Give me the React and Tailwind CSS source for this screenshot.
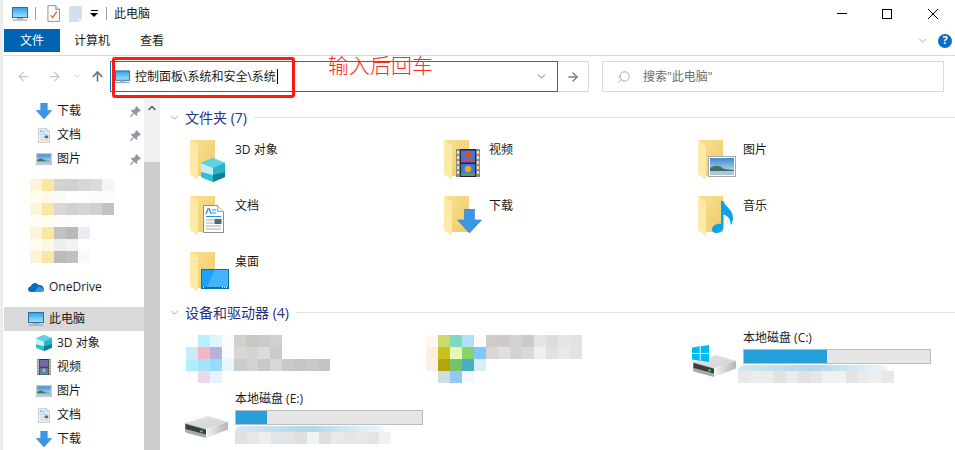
import { ArrowLeft, ArrowRight, ArrowUp, ChevronDown, ChevronUp, Search } from "lucide-react";

// 模糊处理的马赛克块
const navMosaic = [
  ["bg-[#fdf5d9]", "bg-[#fbe6a6]", "bg-[#d5d3cf]", "bg-[#cfd0d0]", "bg-[#d7d7d5]", "bg-[#dcdbd8]", "bg-[#f4f5f9]"],
  ["bg-[#fefbf0]", "bg-[#fef9e8]", "bg-[#fafafa]", "bg-[#fefefe]", "bg-[#fdfdfd]", "bg-[#fcfcfc]", "bg-[#fcfcfe]"],
  ["bg-[#fdf5d9]", "bg-[#fbe6a6]", "bg-[#d8d7d5]", "bg-[#d0d0d0]", "bg-[#d6d5d3]", "bg-[#d2ced2]", "bg-[#c2c2c2]"],
  ["bg-[#fffdf5]", "bg-[#fffcf0]", "bg-[#fcfcfc]", "bg-[#fdfdfd]", "bg-[#fcfefe]"],
  ["bg-[#fdf5d9]", "bg-[#fbe6a6]", "bg-[#c4c1be]", "bg-[#b9b9b7]", "bg-[#e9ecf0]"],
  ["bg-[#fffbee]", "bg-[#fdf8e2]", "bg-[#eeeeee]", "bg-[#f3f3f3]"],
  ["bg-[#fdf3d6]", "bg-[#fbe6a4]", "bg-[#bcbaba]", "bg-[#c1bfc0]", "bg-[#f6fafb]"],
];

const deviceMosaicA = [
  ["bg-transparent", "bg-[#b8eeff]", "bg-[#e0f5ff]", "bg-[#fcfcff]", "bg-[#d0d0ce]", "bg-[#c8c7c4]", "bg-[#ccc9cc]", "bg-[#cfd1cf]"],
  ["bg-[#c8ecf9]", "bg-[#f5b6c4]", "bg-[#b3b3d8]", "bg-[#f5fbff]", "bg-[#d6d6d4]", "bg-[#d4d4d2]", "bg-[#dcdada]", "bg-[#c9cbc9]"],
  ["bg-[#aeeefe]", "bg-[#a4e2fe]", "bg-[#97dbff]", "bg-[#e8f7ff]", "bg-[#ccccca]", "bg-[#d2d2d0]", "bg-[#c9c8c4]", "bg-[#d6d7d6]", "bg-[#cbcac8]", "bg-[#c6c5c2]", "bg-[#ccc8c8]", "bg-[#c2c4c1]"],
  ["bg-transparent", "bg-[#ecd8e8]", "bg-[#e8f3ff]"],
];

const deviceMosaicB = [
  ["bg-[#fff8f0]", "bg-[#cdd96a]", "bg-[#7fd8c0]", "bg-[#b0e0fb]", "bg-[#fcfdfe]", "bg-[#cfcbca]", "bg-[#cdcac9]", "bg-[#d2d2d6]", "bg-[#cdcaca]", "bg-[#e4e5e7]", "bg-[#dedcdd]", "bg-[#e5e6e6]", "bg-[#e3e3e5]"],
  ["bg-[#ffeedd]", "bg-[#c8c21c]", "bg-[#e5f8b8]", "bg-[#86d566]", "bg-[#7fc8ff]", "bg-[#dad5d3]", "bg-[#e0e1df]", "bg-[#d5d2d6]", "bg-[#dad9d9]", "bg-[#eeefee]", "bg-[#e2e1e1]", "bg-[#e8e9e8]", "bg-[#e3e3e3]"],
  ["bg-[#fff0e4]", "bg-[#b5a50a]", "bg-[#74c46a]", "bg-[#48afc0]", "bg-[#d8eefb]"],
  ["bg-transparent", "bg-[#cddde0]", "bg-[#95c8f9]", "bg-[#f3f9ff]"],
];

const driveBlurC = [["bg-[#e9e9e9]", "bg-[#ececec]", "bg-[#ececea]", "bg-[#e2e1df]", "bg-[#ebebeb]", "bg-[#e2e2e2]", "bg-[#e6e6ea]", "bg-[#f0f0f0]", "bg-[#f1f1f1]", "bg-[#e3e3e3]", "bg-[#ebebeb]", "bg-[#eeeeee]", "bg-[#e8e8e8]"]];
const driveBlurE = [["bg-[#e2e1df]", "bg-[#e6e7e6]", "bg-[#f0eeec]", "bg-[#e3e4e6]", "bg-[#e4e4e6]", "bg-[#dfdfdc]", "bg-[#f1f2f4]", "bg-[#dfdedc]", "bg-[#eaeaea]", "bg-[#e6e6e6]", "bg-[#e9e8e8]", "bg-[#e4e4e4]", "bg-[#f2f2f2]"]];

function Mosaic({ rows }) {
  return (
    <div className="flex flex-col">
      {rows.map((row, i) => (
        <div key={i} className="flex h-3">
          {row.map((color, j) => (
            <div key={j} className={`w-3 h-3 ${color}`}></div>
          ))}
        </div>
      ))}
    </div>
  );
}

function MonitorIcon({ className }) {
  return (
    <svg viewBox="0 0 16 14" className={className}>
      <defs>
        <linearGradient id="screen" x1="0" y1="0" x2="0" y2="1">
          <stop offset="0" stopColor="#2aa4ee" />
          <stop offset="1" stopColor="#a8e0fa" />
        </linearGradient>
      </defs>
      <rect x="0.5" y="0.5" width="15" height="10" fill="url(#screen)" stroke="#2f6f96" />
      <rect x="5" y="11" width="6" height="1.2" fill="#9fb2c0" />
      <rect x="0.5" y="12.4" width="15" height="1.2" fill="#8ea6b8" />
    </svg>
  );
}

function NoteIcon({ className }) {
  return (
    <svg viewBox="0 0 14 18" className={className}>
      <path d="M1 .5h8.5l4 4v13H1z" fill="#fff" stroke="#8a8a8a" />
      <path d="M9.500 .5v4h4" fill="#e8e8e8" stroke="#8a8a8a" />
      <path d="M4 11l2 2.500L10.500 7" fill="none" stroke="#e8622a" strokeWidth="1.4" />
    </svg>
  );
}

function BlankDocIcon({ className }) {
  return (
    <svg viewBox="0 0 13 16" className={className}>
      <path d="M0 0h13v13l-3 3H0z" fill="#d3deef" />
      <path d="M10 13h3l-3 3z" fill="#eef2f9" />
    </svg>
  );
}

function DownloadIcon({ className }) {
  return (
    <svg viewBox="0 0 24 24" className={className}>
      <path d="M7 0h10v11h7L12 24 0 11h7z" fill="#3a96e6" stroke="#2f80c8" strokeWidth="0.6" />
    </svg>
  );
}

function DocIcon({ className }) {
  return (
    <svg viewBox="0 0 21 28" className={className}>
      <path d="M.5 .5h14l6 6v21H.5z" fill="#fff" stroke="#8e8e8e" />
      <path d="M14.500 .5v6h6" fill="#eee" stroke="#a5a5a5" />
      <path d="M3 9l2-5h1.200l2 5" fill="none" stroke="#2a8fde" strokeWidth="1.3" />
      <path d="M9 5h4M9 8h4" stroke="#2a8fde" />
      <path d="M3 11.500h15" stroke="#2a8fde" />
      <path d="M3 15h8M3 18h8M3 21h15M3 24h15" stroke="#a9a9a9" />
      <rect x="11.5" y="14" width="7" height="5" fill="#4a6c80" />
    </svg>
  );
}

function PictureIcon({ className }) {
  return (
    <svg viewBox="0 0 28 21" className={className} preserveAspectRatio="none">
      <defs>
        <linearGradient id="sky" x1="0" y1="0" x2="0" y2="1">
          <stop offset="0" stopColor="#3f8bd0" />
          <stop offset="1" stopColor="#d6eaf6" />
        </linearGradient>
      </defs>
      <rect x="0.5" y="0.5" width="27" height="20" fill="#fff" stroke="#a6a6a6" />
      <rect x="2" y="2" width="24" height="17" fill="url(#sky)" />
      <path d="M2 12c5-3 9-3 14 1l10 1v1H2z" fill="#3f6f68" />
      <rect x="2" y="15" width="24" height="4" fill="#a9c8dc" />
    </svg>
  );
}

function CubeIcon({ className }) {
  return (
    <svg viewBox="0 0 24 24" className={className}>
      <path d="M12 0l12 5v14l-12 5L0 19V5z" fill="#27b4cb" />
      <path d="M12 0l12 5-12 5L0 5z" fill="#62d2e2" />
      <path d="M0 5l12 5v14L0 19z" fill="#c5eff3" />
      <path d="M0 14l12 3v7L0 19z" fill="#2ec1d3" />
      <path d="M12 17l12-3v5l-12 5z" fill="#0d7f96" />
    </svg>
  );
}

function FilmIcon({ className }) {
  return (
    <svg viewBox="0 0 24 28" className={className}>
      <rect x="0" y="0" width="24" height="28" fill="#8a8a7a" />
      <rect x="4" y="0" width="16" height="28" fill="#22262e" />
      <rect x="5" y="1.5" width="14" height="12" fill="#3f78d8" />
      <rect x="5" y="15" width="14" height="12" fill="#3f78d8" />
      <circle cx="12" cy="6" r="3.2" fill="#e24a2a" />
      <circle cx="12" cy="20" r="3.2" fill="#e8a72a" />
      <rect x="5" y="10" width="14" height="3" fill="#c2467a" />
      <rect x="5" y="24" width="14" height="3" fill="#5aa050" />
      <path d="M1 2h2v3H1zM1 7h2v3H1zM1 12h2v3H1zM1 17h2v3H1zM1 22h2v3H1zM21 2h2v3h-2zM21 7h2v3h-2zM21 12h2v3h-2zM21 17h2v3h-2zM21 22h2v3h-2z" fill="#e8e4c8" />
    </svg>
  );
}

function MusicIcon({ className }) {
  return (
    <svg viewBox="0 0 21 32" className={className}>
      <path d="M9 0h2.500c.5 5 9.500 8 9.500 17 0 3-1 6-2.500 7 .5-5-2-9-7-10.500V26c0 3.500-3.500 6-7 6-3 0-4.500-1.500-4.500-3.500C0 25 4.500 22 9 23z" fill="#0ea0ee" />
    </svg>
  );
}

function DesktopIcon({ className }) {
  return (
    <svg viewBox="0 0 28 20" className={className}>
      <rect x="0.5" y="0.5" width="27" height="19" fill="#1ea0fb" stroke="#0f6fa8" />
      <path d="M14 1h13v17H6z" fill="#45b4fb" />
      <path d="M1 18h26v1.500H1z" fill="#0f6fa8" />
      <path d="M2 18.500h1M21 18.500h1M23 18.500h1M25 18.500h1" stroke="#fff" />
    </svg>
  );
}

function OneDriveIcon({ className }) {
  return (
    <svg viewBox="0 0 16 10" className={className}>
      <path d="M3.200 10C1.400 10 0 8.800 0 7.200 0 5.700 1.200 4.600 2.700 4.500 3.300 2.300 5.100 1 7 1c1.500 0 2.800.8 3.500 2C13.400 2.600 16 4.600 16 7.300 16 8.800 14.800 10 13.200 10z" fill="#0f6cbd" />
      <path d="M6.500 10l4-5.500 5 2.200c.5 2-1 3.300-2.300 3.300z" fill="#2a9be8" />
    </svg>
  );
}

function PinIcon() {
  return (
    <svg viewBox="0 0 12 12" className="w-[11px] h-[11px]">
      <path d="M7 0l5 5-1 1-1-.3L7.700 8 8 10l-1 1-2.500-2.500L1 12 0 11l3.500-3.500L1 5l1-1 2 .3L6.300 2 6 1z" fill="#8d98a2" />
    </svg>
  );
}

function DriveIcon({ className }) {
  return (
    <svg viewBox="0 0 43 22" className={className}>
      <defs>
        <linearGradient id="driveTop" x1="0" y1="0" x2="1" y2="1">
          <stop offset="0" stopColor="#e6e7ea" />
          <stop offset="1" stopColor="#cfd0d4" />
        </linearGradient>
        <linearGradient id="driveSide" x1="0" y1="0" x2="1" y2="0">
          <stop offset="0" stopColor="#f4f4f4" />
          <stop offset="1" stopColor="#b4b4b8" />
        </linearGradient>
      </defs>
      <path d="M0 7L23 0l20 6-22 7z" fill="url(#driveTop)" />
      <path d="M21 13l22-7v7.500L21 22z" fill="url(#driveSide)" />
      <path d="M0 7l21 6v9L2 17c-1.300-.5-2-1-2-2.500z" fill="#a9a9ab" />
      <path d="M.5 8L21 13.800v4.700L.5 13z" fill="#3d3d3d" />
      <rect x="15" y="14.500" width="3" height="1.800" fill="#35d04a" />
    </svg>
  );
}

function WindowsLogo({ className }) {
  return (
    <svg viewBox="0 0 17 17" className={className}>
      <path d="M0 2.500L7.800 1.300v6.700H0zM8.700 1.200L17 0v8H8.700zM0 9h7.800v6.700L0 14.500zM8.700 9H17v8l-8.300-1.200z" fill="#00baf2" />
    </svg>
  );
}

function Folder({ children }) {
  return (
    <div className="relative w-[45px] h-[42px] shrink-0">
      <svg viewBox="0 0 25 40" className="w-[25px] h-[40px]">
        <defs>
          <linearGradient id="folderBack" x1="0" y1="0" x2="1" y2="1">
            <stop offset="0" stopColor="#fbe08f" />
            <stop offset="1" stopColor="#eecb6c" />
          </linearGradient>
        </defs>
        <path d="M0 0h25v36H8z" fill="url(#folderBack)" />
        <path d="M0 0l8 6v34l-8-6z" fill="#fde9a8" />
      </svg>
      {children}
    </div>
  );
}

const folders = [
  { name: "3D 对象", icon: <CubeIcon className="absolute left-[11px] top-[18px] w-[24px] h-[24px]" /> },
  { name: "视频", icon: <FilmIcon className="absolute left-[12px] top-[9px] w-[24px] h-[28px]" /> },
  { name: "图片", icon: <PictureIcon className="absolute left-[10px] top-[16px] w-[28px] h-[21px]" /> },
  { name: "文档", icon: <DocIcon className="absolute left-[13px] top-[9px] w-[21px] h-[28px]" /> },
  { name: "下载", icon: <DownloadIcon className="absolute left-[13px] top-[13px] w-[25px] h-[24px]" /> },
  { name: "音乐", icon: <MusicIcon className="absolute left-[14px] top-[5px] w-[21px] h-[32px]" /> },
  { name: "桌面", icon: <DesktopIcon className="absolute left-[11px] top-[17px] w-[28px] h-[20px]" /> },
];

function NavRow({ icon, label, pinned }) {
  return (
    <div className="h-6 flex items-center">
      <div className="w-[16px] h-[16px] ml-[33px] flex items-center justify-center shrink-0">{icon}</div>
      <span className="ml-[5px] flex-1">{label}</span>
      {pinned && <div className="mr-[3px]"><PinIcon /></div>}
    </div>
  );
}

function SectionHeader({ title, className }) {
  return (
    <div className={`h-5 flex items-center ${className}`}>
      <ChevronDown className="w-[13px] h-[13px] ml-[8px] text-[#7a7a7a]" strokeWidth={1.2} />
      <span className="ml-[4px] text-[14px] text-[#1e3287]">{title}</span>
      <div className="flex-1 h-px bg-[#e2e2e2] ml-[7px]"></div>
    </div>
  );
}

function DriveBar({ label, used, blur, blurOffset }) {
  return (
    <div className="w-[240px]">
      <div className="h-[18px] leading-[18px]">{label}</div>
      <div className="mt-[2px] w-[188px] h-[15px] border border-[#bcbcbc] bg-[#e6e6e6]">
        <div className={`h-full bg-[#26a0da] ${used}`}></div>
      </div>
      <div className={blurOffset}>
        <div className="h-[6px] w-[150px] rounded-t-full bg-gradient-to-r from-[#d4e8f2] via-[#b2d7ea] to-[#eef6fa]"></div>
        <Mosaic rows={blur} />
      </div>
    </div>
  );
}

export default function App() {
  return (
    <div className="relative w-[955px] h-[450px] overflow-hidden bg-white border-l-[3px] border-[#ececec] text-[12px] text-[#1a1a1a] font-['Open_Sans','Noto_Sans_CJK_SC',sans-serif]">
      {/* 标题栏 */}
      <div className="h-[27px] mb-[2px] flex items-center">
        <MonitorIcon className="w-[16px] h-[14px] ml-[9px]" />
        <div className="w-px h-[13px] bg-[#a0a0a0] ml-[7px]"></div>
        <NoteIcon className="w-[13px] h-[17px] ml-[11px]" />
        <BlankDocIcon className="w-[13px] h-[16px] ml-[9px]" />
        <div className="ml-[8px] flex flex-col items-center gap-[2px]">
          <div className="w-[7px] h-px bg-black"></div>
          <div className="w-0 h-0 border-x-[4px] border-x-transparent border-t-[4px] border-t-black"></div>
        </div>
        <div className="w-px h-[13px] bg-[#a0a0a0] ml-[8px]"></div>
        <span className="ml-[7px]">此电脑</span>
        <div className="ml-auto flex items-center">
          <div className="w-[10px] h-px bg-black mr-[35px]"></div>
          <div className="w-[10px] h-[10px] border border-black mr-[36px]"></div>
          <svg viewBox="0 0 10 10" className="w-[10px] h-[10px] mr-[17px]">
            <path d="M0 0l10 10M10 0L0 10" stroke="#000" strokeWidth="1" fill="none" />
          </svg>
        </div>
      </div>

      {/* 功能区选项卡 */}
      <div className="h-[27px] flex items-start border-b border-[#d9d9d9]">
        <div className="w-[56px] h-[23px] ml-px pt-px bg-[#0063b1] text-white flex items-center justify-center">文件</div>
        <div className="h-[23px] pt-px flex items-center ml-[14px]">计算机</div>
        <div className="h-[23px] pt-px flex items-center ml-[30px]">查看</div>
        <div className="ml-auto h-[23px] flex items-center">
          <ChevronDown className="w-[13px] h-[13px] text-[#9a9a9a] mr-[9px]" strokeWidth={1.5} />
          <div className="w-[14px] h-[14px] mr-[3px] rounded-full bg-[#0a6cc4] text-white text-[11px] font-bold flex items-center justify-center">?</div>
        </div>
      </div>

      {/* 地址栏 */}
      <div className="h-[43px] pt-[5px] flex items-start">
        <div className="h-[30px] flex items-center">
          <ArrowLeft className="w-[15px] h-[15px] ml-[13px] text-[#c8c8c8]" strokeWidth={2} />
          <ArrowRight className="w-[15px] h-[15px] ml-[16px] text-[#c8c8c8]" strokeWidth={2} />
          <ChevronDown className="w-[10px] h-[10px] ml-[10px] text-[#c8c8c8]" strokeWidth={2} />
          <ArrowUp className="w-[15px] h-[15px] ml-[8px] text-[#6e6e6e]" strokeWidth={2.5} />
        </div>
        <div className="w-[448px] h-[31px] ml-[5px] border border-[#0078d7] flex items-center">
          <MonitorIcon className="w-[15px] h-[14px] ml-[4px]" />
          <span className="ml-[5px] border-r border-black pr-px leading-[15px]">控制面板\系统和安全\系统</span>
          <ChevronDown className="w-[13px] h-[13px] ml-auto mr-[9px] text-[#555]" strokeWidth={1.5} />
        </div>
        <div className="w-[31px] h-[31px] border border-[#d9d9d9] border-l-0 flex items-center justify-center">
          <ArrowRight className="w-[14px] h-[14px] text-[#808080]" strokeWidth={2.5} />
        </div>
        <div className="w-[342px] h-[31px] ml-[13px] border border-[#d9d9d9] flex items-center text-[#6d6d6d]">
          <Search className="w-[14px] h-[14px] ml-[14px] text-[#8a8a8a] -scale-x-100" strokeWidth={1.2} />
          <span className="ml-[12px]">搜索"此电脑"</span>
        </div>
      </div>

      {/* 主体 */}
      <div className="flex h-[351px]">
        <div className="w-[141px] shrink-0">
          <NavRow icon={<DownloadIcon className="w-[16px] h-[16px]" />} label="下载" pinned />
          <NavRow icon={<DocIcon className="w-[12px] h-[15px]" />} label="文档" pinned />
          <NavRow icon={<PictureIcon className="w-[16px] h-[12px]" />} label="图片" pinned />
          <div className="mt-[8px] ml-[27px]">
            <Mosaic rows={navMosaic} />
          </div>
          <div className="h-6 mt-[12px] flex items-center">
            <OneDriveIcon className="w-[16px] h-[10px] ml-[25px]" />
            <span className="ml-[5px]">OneDrive</span>
          </div>
          <div className="h-6 mt-[8px] ml-px bg-[#d9d9d9] flex items-center">
            <MonitorIcon className="w-[16px] h-[14px] ml-[24px]" />
            <span className="ml-[5px]">此电脑</span>
          </div>
          <NavRow icon={<CubeIcon className="w-[16px] h-[16px]" />} label="3D 对象" />
          <NavRow icon={<FilmIcon className="w-[14px] h-[16px]" />} label="视频" />
          <NavRow icon={<PictureIcon className="w-[16px] h-[12px]" />} label="图片" />
          <NavRow icon={<DocIcon className="w-[12px] h-[15px]" />} label="文档" />
          <NavRow icon={<DownloadIcon className="w-[16px] h-[16px]" />} label="下载" />
        </div>

        {/* 滚动条 */}
        <div className="w-[16px] shrink-0 bg-[#f0f0f0] flex flex-col">
          <div className="h-[63px] flex justify-center pt-[3px]">
            <ChevronUp className="w-[12px] h-[12px] text-[#606060]" strokeWidth={3} />
          </div>
          <div className="flex-1 bg-[#cdcdcd]"></div>
        </div>

        <div className="flex-1 pt-[8px]">
          <SectionHeader title="文件夹 (7)" />
          <div className="mt-[13px] ml-[30px] grid grid-cols-[254px_254px_1fr] gap-y-[14px]">
            {folders.map((f) => (
              <div key={f.name} className="flex h-[42px]">
                <Folder>{f.icon}</Folder>
                <span className="leading-[18px] pt-px">{f.name}</span>
              </div>
            ))}
          </div>

          <SectionHeader title="设备和驱动器 (4)" className="mt-[8px]" />
          <div className="mt-[7px] ml-[25px] grid grid-cols-[241px_266px_1fr] auto-rows-[61px]">
            <div className="pt-[6px] ml-px">
              <Mosaic rows={deviceMosaicA} />
            </div>
            <div className="pt-[6px]">
              <Mosaic rows={deviceMosaicB} />
            </div>
            <div className="flex">
              <div className="relative w-[51px] h-[50px] shrink-0">
                <DriveIcon className="absolute left-[1px] top-[26px] w-[43px] h-[22px]" />
                <WindowsLogo className="absolute left-0 top-[16px] w-[17px] h-[17px]" />
              </div>
              <DriveBar label="本地磁盘 (C:)" used="w-[83px]" blur={driveBlurC} blurOffset="-ml-[5px] mt-px" />
            </div>
            <div className="flex">
              <div className="w-[50px] h-[50px] shrink-0 pt-[26px]">
                <DriveIcon className="w-[43px] h-[22px]" />
              </div>
              <DriveBar label="本地磁盘 (E:)" used="w-[31px]" blur={driveBlurE} blurOffset="mt-px" />
            </div>
          </div>
        </div>
      </div>

      {/* 红色标注 */}
      <div className="absolute left-[109px] top-[57px] w-[183px] h-[41px] border-[3px] border-[#ff1a10] rounded-[3px]"></div>
      <div className="absolute left-[325px] top-[50px] text-[21px] leading-[30px] font-light text-[#ff2a1a]">输入后回车</div>
    </div>
  );
}
